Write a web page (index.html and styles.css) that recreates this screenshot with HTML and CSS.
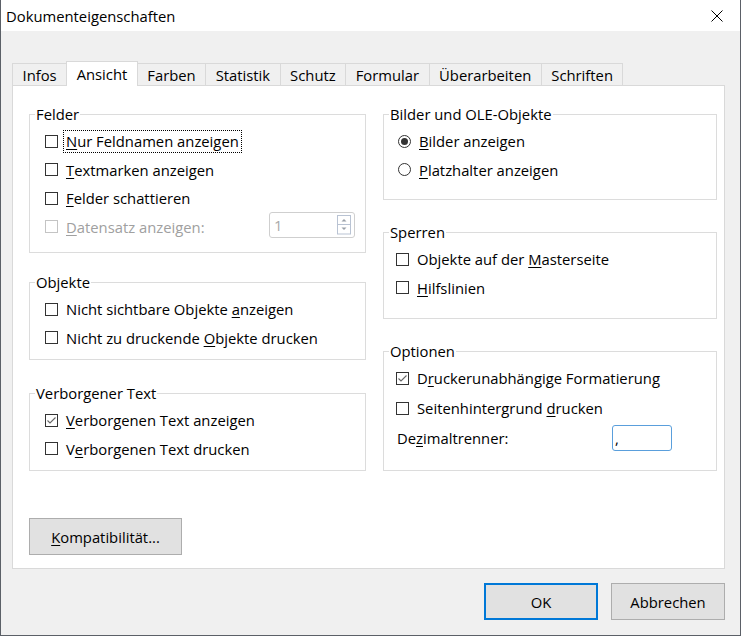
FILE: index.html
```html
<!DOCTYPE html>
<html lang="de">
<head>
<meta charset="utf-8">
<title>Dokumenteigenschaften</title>
<link rel="stylesheet" href="styles.css">
</head>
<body>
<div class="window">
  <div class="titlebar">
    <span class="title">Dokumenteigenschaften</span>
    <span class="close"><svg width="12" height="12" viewBox="0 0 12 12"><path d="M0.5 0.5L11.5 11.5M11.5 0.5L0.5 11.5" stroke="#000" stroke-width="1" fill="none"/></svg></span>
  </div>
  <div class="client">
    <div class="tabs">
      <div class="tab">Infos</div>
      <div class="tab active">Ansicht</div>
      <div class="tab">Farben</div>
      <div class="tab">Statistik</div>
      <div class="tab">Schutz</div>
      <div class="tab">Formular</div>
      <div class="tab">Überarbeiten</div>
      <div class="tab">Schriften</div>
    </div>
    <div class="panel">
      <div class="col col-left">
        <fieldset class="group g-felder">
          <legend>Felder</legend>
          <div class="row"><span class="cb"></span><span class="label focus"><u>N</u>ur Feldnamen anzeigen</span></div>
          <div class="row"><span class="cb"></span><span class="label"><u>T</u>extmarken anzeigen</span></div>
          <div class="row"><span class="cb"></span><span class="label"><u>F</u>elder schattieren</span></div>
          <div class="row disabled"><span class="cb"></span><span class="label"><u>D</u>atensatz anzeigen:</span>
            <span class="spin"><span class="spin-value">1</span>
              <svg class="spin-btns" width="14" height="20" viewBox="0 0 14 20">
                <rect x="0.5" y="0.5" width="13" height="9" fill="#fff" stroke="#b9c3d3"/>
                <rect x="0.5" y="9.5" width="13" height="9.5" fill="#fff" stroke="#b9c3d3"/>
                <path d="M4.5 6.5L7 4L9.5 6.5Z" fill="#9aa0a8"/>
                <path d="M4.5 12.5L7 15L9.5 12.5Z" fill="#9aa0a8"/>
              </svg>
            </span>
          </div>
        </fieldset>
        <fieldset class="group g-objekte">
          <legend>Objekte</legend>
          <div class="row"><span class="cb"></span><span class="label">Nicht sichtbare Objekte <u>a</u>nzeigen</span></div>
          <div class="row"><span class="cb"></span><span class="label">Nicht zu druckende <u>O</u>bjekte drucken</span></div>
        </fieldset>
        <fieldset class="group g-verborgen">
          <legend>Verborgener Text</legend>
          <div class="row"><span class="cb checked"><svg width="11" height="11" viewBox="0 0 11 11"><path d="M1.5 5.5L4 8L9.5 2.5" stroke="#666" stroke-width="1.1" fill="none"/></svg></span><span class="label"><u>V</u>erborgenen Text anzeigen</span></div>
          <div class="row"><span class="cb"></span><span class="label">V<u>e</u>rborgenen Text drucken</span></div>
        </fieldset>
        <button class="btn btn-compat"><u>K</u>ompatibilität...</button>
      </div>
      <div class="col col-right">
        <fieldset class="group g-bilder">
          <legend>Bilder und OLE-Objekte</legend>
          <div class="row row-radio"><svg class="rb" width="13" height="13" viewBox="0 0 13 13"><circle cx="6.5" cy="6.5" r="6" fill="#fff" stroke="#333"/><circle cx="6.5" cy="6.5" r="3.5" fill="#333"/></svg><span class="label"><u>B</u>ilder anzeigen</span></div>
          <div class="row row-radio"><svg class="rb" width="13" height="13" viewBox="0 0 13 13"><circle cx="6.5" cy="6.5" r="6" fill="#fff" stroke="#333"/></svg><span class="label"><u>P</u>latzhalter anzeigen</span></div>
        </fieldset>
        <fieldset class="group g-sperren">
          <legend>Sperren</legend>
          <div class="row"><span class="cb"></span><span class="label">Objekte auf der <u>M</u>asterseite</span></div>
          <div class="row"><span class="cb"></span><span class="label"><u>H</u>ilfslinien</span></div>
        </fieldset>
        <fieldset class="group g-optionen">
          <legend>Optionen</legend>
          <div class="row"><span class="cb checked"><svg width="11" height="11" viewBox="0 0 11 11"><path d="M1.5 5.5L4 8L9.5 2.5" stroke="#666" stroke-width="1.1" fill="none"/></svg></span><span class="label">D<u>r</u>uckerunabhängige Formatierung</span></div>
          <div class="row"><span class="cb"></span><span class="label">Seitenhintergrund <u>d</u>rucken</span></div>
          <div class="row row-field"><span class="label dec-label">De<u>z</u>imaltrenner:</span><span class="textfield">,</span></div>
        </fieldset>
      </div>
    </div>
    <div class="buttons">
      <button class="btn btn-default">OK</button>
      <button class="btn">Abbrechen</button>
    </div>
  </div>
</div>
</body>
</html>
```
FILE: styles.css
```css
* { box-sizing: border-box; }
html, body { margin: 0; padding: 0; }
body {
  width: 741px;
  height: 636px;
  overflow: hidden;
  font-family: "Open Sans", "Noto Sans", sans-serif;
  font-size: 14.8px;
  color: #000;
  background: #fff;
}
u { text-decoration: underline; text-underline-offset: 2px; text-decoration-thickness: 1px; }

.window {
  width: 741px;
  height: 636px;
  border: 1px solid #5b6067;
  border-top: none;
  background: #f0f0f0;
  display: flex;
  flex-direction: column;
}
.titlebar {
  height: 31px;
  flex: none;
  background: #fff;
  display: flex;
  align-items: center;
  justify-content: space-between;
  padding-left: 5px;
}
.close {
  width: 46px;
  height: 31px;
  display: flex;
  align-items: center;
  justify-content: center;
}

.client {
  flex: 1;
  padding: 30px 15px 0 11px;
  display: flex;
  flex-direction: column;
}

.tabs {
  display: flex;
  align-items: flex-end;
  height: 24px;
}
.tab {
  height: 22px;
  padding: 0 9.5px;
  border: 1px solid #d9d9d9;
  border-bottom: none;
  margin-right: -1px;
  background: #f0f0f0;
  display: flex;
  align-items: center;
  white-space: nowrap;
}
.tab.active {
  height: 25px;
  margin-bottom: -1px;
  background: #fff;
  position: relative;
  z-index: 1;
  padding-bottom: 1px;
}

.panel {
  height: 484px;
  background: #fff;
  border: 1px solid #d9d9d9;
  padding: 18px 7px 0 16px;
  display: grid;
  grid-template-columns: 337px 334px;
  column-gap: 17px;
  align-items: start;
}
.col { display: flex; flex-direction: column; align-items: flex-start; }
.col .group { width: 100%; }

.group {
  margin: 0;
  padding: 3px 0 7px;
  border: 1px solid #dcdcdc;
  min-width: 0;
}
.group legend {
  padding: 0 1px;
  margin-left: 5px;
  line-height: 20px;
  height: 20px;
}
.g-felder { padding-bottom: 11px; }
.g-objekte { margin-top: 19px; }
.g-verborgen { margin-top: 23px; }
.g-bilder { padding-bottom: 15px; }
.g-sperren { margin-top: 22px; padding-bottom: 16px; }
.g-optionen { margin-top: 22px; padding-top: 2px; padding-bottom: 17px; }
.g-optionen .row { height: 30px; }

.row {
  height: 28.5px;
  display: flex;
  align-items: center;
  padding-left: 15px;
  padding-right: 10px;
  white-space: nowrap;
}
.col-right .row { padding-left: 12px; }
.col-right .row-radio { padding-left: 14px; }
.col-right .row-field { padding-left: 13px; }

.cb {
  width: 13px;
  height: 13px;
  flex: none;
  border: 1px solid #333;
  background: #fff;
  margin-right: 8px;
  display: flex;
  align-items: center;
  justify-content: center;
}
.rb { flex: none; margin-right: 8px; }
.label { display: inline-block; }
.focus {
  border: 1px dotted #000;
  padding: 0 2px;
  line-height: 21px;
  margin-left: -3px;
}
.disabled { color: #a0a0a0; }
.disabled .cb { border-color: #c4c4c4; }

.spin {
  margin-left: auto;
  margin-bottom: 4px;
  width: 86px;
  height: 26px;
  border: 1px solid #cfcfcf;
  border-radius: 3px;
  display: flex;
  align-items: center;
  justify-content: space-between;
  padding: 0 3px 0 4px;
  color: #a8a8a8;
}
.spin-btns { display: block; }

.dec-label { width: 215px; }
.textfield {
  width: 60px;
  height: 26px;
  border: 1px solid #5a9fdc;
  border-radius: 3px;
  padding: 2px 0 0 2px;
  line-height: 20px;
}

.btn {
  font-family: inherit;
  font-size: 14.8px;
  color: #000;
  background: #e1e1e1;
  border: 1px solid #adadad;
  border-radius: 0;
  padding: 0;
  height: 37px;
  cursor: default;
}
.btn-compat { width: 153px; margin-top: 47px; }
.buttons {
  display: flex;
  justify-content: flex-end;
  gap: 13px;
  margin-top: 14px;
}
.buttons .btn { width: 114px; }
.btn-default { border: 2px solid #0078d7; }
```
